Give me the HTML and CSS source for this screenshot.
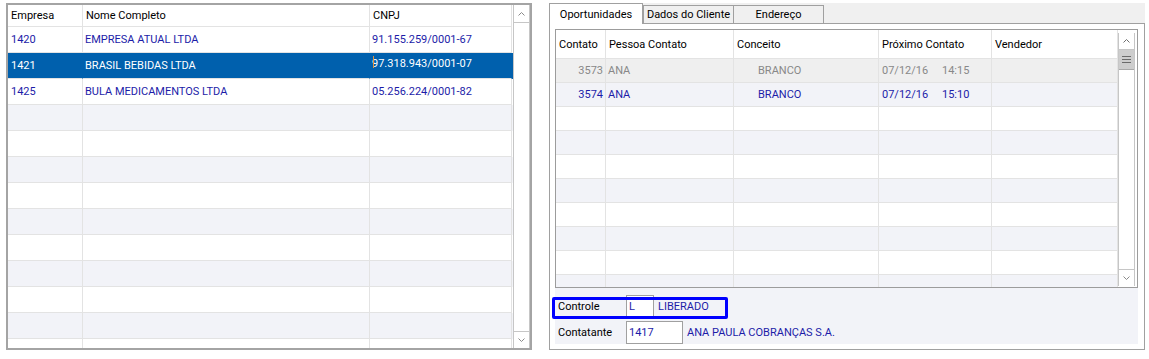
FILE: index.html
```html
<!DOCTYPE html>
<html lang="pt-BR">
<head>
    <meta charset="UTF-8">
    <title>Clientes - Oportunidades</title>
    <link rel="stylesheet" href="styles.css">
</head>
<body>

    <div class="screen">
        <!-- lista de empresas -->
        <div class="grid companies">
            <div class="grid-body">
                <div class="row head">
                    <div class="cell">Empresa</div>
                    <div class="cell">Nome Completo</div>
                    <div class="cell cnpj">CNPJ</div>
                </div>
                <div class="row">
                    <div class="cell">1420</div>
                    <div class="cell name">EMPRESA ATUAL LTDA</div>
                    <div class="cell cnpj">91.155.259/0001-67</div>
                </div>
                <div class="row selected">
                    <div class="cell">1421</div>
                    <div class="cell name">BRASIL BEBIDAS LTDA</div>
                    <div class="cell cnpj editing"><span class="caret"></span>97.318.943/0001-07</div>
                </div>
                <div class="row">
                    <div class="cell">1425</div>
                    <div class="cell name">BULA MEDICAMENTOS LTDA</div>
                    <div class="cell cnpj">05.256.224/0001-82</div>
                </div>
                <div class="row"><div class="cell"></div><div class="cell"></div><div class="cell"></div></div>
                <div class="row"><div class="cell"></div><div class="cell"></div><div class="cell"></div></div>
                <div class="row"><div class="cell"></div><div class="cell"></div><div class="cell"></div></div>
                <div class="row"><div class="cell"></div><div class="cell"></div><div class="cell"></div></div>
                <div class="row"><div class="cell"></div><div class="cell"></div><div class="cell"></div></div>
                <div class="row"><div class="cell"></div><div class="cell"></div><div class="cell"></div></div>
                <div class="row"><div class="cell"></div><div class="cell"></div><div class="cell"></div></div>
                <div class="row"><div class="cell"></div><div class="cell"></div><div class="cell"></div></div>
                <div class="row"><div class="cell"></div><div class="cell"></div><div class="cell"></div></div>
                <div class="row"><div class="cell"></div><div class="cell"></div><div class="cell"></div></div>
            </div>
            <div class="vscroll">
                <div class="sb-btn up">
                    <svg width="7" height="4" viewBox="0 0 7 4"><polyline points="0.5,3.5 3.5,0.5 6.5,3.5" fill="none" stroke="#8a8a8a" stroke-width="1"/></svg>
                </div>
                <div class="sb-track"></div>
                <div class="sb-btn down">
                    <svg width="7" height="4" viewBox="0 0 7 4"><polyline points="0.5,0.5 3.5,3.5 6.5,0.5" fill="none" stroke="#8a8a8a" stroke-width="1"/></svg>
                </div>
            </div>
        </div>

        <!-- abas do cliente -->
        <div class="tabs-panel">
            <div class="tab-strip">
                <div class="tab active">Oportunidades</div>
                <div class="tab dados">Dados do Cliente</div>
                <div class="tab endereco">Endereço</div>
            </div>
            <div class="tab-page">
                <div class="grid contacts">
                    <div class="grid-body">
                        <div class="row head">
                            <div class="cell">Contato</div>
                            <div class="cell">Pessoa Contato</div>
                            <div class="cell">Conceito</div>
                            <div class="cell">Próximo Contato</div>
                            <div class="cell">Vendedor</div>
                        </div>
                        <div class="row inactive">
                            <div class="cell num">3573</div>
                            <div class="cell person">ANA</div>
                            <div class="cell concept">BRANCO</div>
                            <div class="cell"><span class="date">07/12/16</span>14:15</div>
                            <div class="cell"></div>
                        </div>
                        <div class="row">
                            <div class="cell num">3574</div>
                            <div class="cell person">ANA</div>
                            <div class="cell concept">BRANCO</div>
                            <div class="cell"><span class="date">07/12/16</span>15:10</div>
                            <div class="cell"></div>
                        </div>
                        <div class="row"><div class="cell"></div><div class="cell"></div><div class="cell"></div><div class="cell"></div><div class="cell"></div></div>
                        <div class="row"><div class="cell"></div><div class="cell"></div><div class="cell"></div><div class="cell"></div><div class="cell"></div></div>
                        <div class="row"><div class="cell"></div><div class="cell"></div><div class="cell"></div><div class="cell"></div><div class="cell"></div></div>
                        <div class="row"><div class="cell"></div><div class="cell"></div><div class="cell"></div><div class="cell"></div><div class="cell"></div></div>
                        <div class="row"><div class="cell"></div><div class="cell"></div><div class="cell"></div><div class="cell"></div><div class="cell"></div></div>
                        <div class="row"><div class="cell"></div><div class="cell"></div><div class="cell"></div><div class="cell"></div><div class="cell"></div></div>
                        <div class="row"><div class="cell"></div><div class="cell"></div><div class="cell"></div><div class="cell"></div><div class="cell"></div></div>
                        <div class="row"><div class="cell"></div><div class="cell"></div><div class="cell"></div><div class="cell"></div><div class="cell"></div></div>
                    </div>
                    <div class="vscroll">
                        <div class="sb-btn up">
                            <svg width="7" height="4" viewBox="0 0 7 4"><polyline points="0.5,3.5 3.5,0.5 6.5,3.5" fill="none" stroke="#6e6e6e" stroke-width="1"/></svg>
                        </div>
                        <div class="sb-thumb">
                            <svg width="9" height="7" viewBox="0 0 9 7"><path d="M0 0.5H9M0 3.5H9M0 6.5H9" stroke="#6a6a6a" stroke-width="1"/></svg>
                        </div>
                        <div class="sb-track"></div>
                        <div class="sb-btn down">
                            <svg width="7" height="4" viewBox="0 0 7 4"><polyline points="0.5,0.5 3.5,3.5 6.5,0.5" fill="none" stroke="#8a8a8a" stroke-width="1"/></svg>
                        </div>
                    </div>
                </div>

                <div class="fields">
                    <div class="field-row highlight">
                        <span class="field-label">Controle</span>
                        <span class="field-input short">L</span>
                        <span class="field-value">LIBERADO</span>
                    </div>
                    <div class="field-row tall">
                        <span class="field-label">Contatante</span>
                        <span class="field-input medium">1417</span>
                        <span class="field-value">ANA PAULA COBRANÇAS S.A.</span>
                    </div>
                </div>
            </div>
        </div>
    </div>

</body>
</html>
```

FILE: styles.css
```css
body {
    margin: 0;
    background-color: #fff;
    font-family: Roboto, "Liberation Sans", Arial, sans-serif;
    font-size: 11px;
    color: #000;
}
.screen {
    display: flex;
    align-items: flex-start;
    gap: 17px;
    padding: 3px 0 0 6px;
}

/* grids */
.grid {
    display: flex;
    box-sizing: border-box;
    overflow: hidden;
    background-color: #fff;
}
.grid-body {
    flex: 1;
    overflow: hidden;
}
.row {
    display: grid;
}
.cell {
    display: flex;
    align-items: center;
    box-sizing: border-box;
    padding-left: 3px;
    border-right: 1px solid #e3e3e3;
    border-bottom: 1px solid #e3e3e3;
    white-space: nowrap;
    overflow: hidden;
    color: #1c1ca8;
}
.row.head .cell {
    color: #000;
}
.row:nth-child(odd):not(.head) {
    background-color: #f2f3f8;
}

.companies {
    width: 526px;
    height: 347px;
    border: 2px solid #a4a4a4;
}
.companies .row {
    grid-template-columns: 75px 287px 142px;
    height: 26px;
}
.companies .row.head {
    height: 22px;
}
.companies .cell.name,
.companies .cell.cnpj {
    padding-left: 2px;
}
.companies .row.head .cell.cnpj {
    padding-left: 3px;
}
.companies .row.selected {
    background-color: #0060ad;
}
.companies .row.selected .cell {
    color: #fff;
    border-right-color: #0060ad;
}
.cell.editing {
    position: relative;
    align-items: flex-start;
    padding-top: 4px;
}
.caret {
    position: absolute;
    left: 3px;
    top: 3px;
    width: 1px;
    height: 12px;
    background-color: #e0913f;
}

.contacts {
    width: 583px;
    height: 259px;
    border: 1px solid #9c9c9c;
}
.contacts .row {
    grid-template-columns: 50px 128px 145px 113px 126px;
    height: 24px;
}
.contacts .row.head {
    height: 29px;
}
.contacts .row.inactive {
    background-color: #efefef;
}
.contacts .row.inactive .cell {
    color: #888;
}
.cell.num {
    justify-content: flex-end;
    padding-right: 2px;
}
.cell.person {
    padding-left: 2px;
}
.cell.concept {
    padding-left: 24px;
}
.date {
    flex: none;
    width: 60px;
}

/* scrollbars */
.vscroll {
    width: 17px;
    display: flex;
    flex-direction: column;
    box-sizing: border-box;
    border-left: 1px solid #c6c6c6;
    border-right: 1px solid #c6c6c6;
    background-color: #fff;
}
.sb-btn {
    display: flex;
    align-items: center;
    justify-content: center;
    box-sizing: border-box;
    height: 18px;
}
.sb-btn.up {
    border-bottom: 1px solid #c6c6c6;
}
.sb-btn.down {
    height: 17px;
    border-top: 1px solid #c6c6c6;
}
.sb-track {
    flex: 1;
}
.contacts .vscroll {
    margin: 3px 2px 1px 0;
}
.contacts .sb-btn.up {
    height: 17px;
}
.sb-thumb {
    height: 20px;
    display: flex;
    align-items: center;
    justify-content: center;
    background-color: #cdcdcd;
    border-bottom: 1px solid #a8a8a8;
    box-sizing: border-box;
}

/* tabs */
.tabs-panel {
    width: 596px;
}
.tab-strip {
    display: flex;
    align-items: flex-end;
    height: 20px;
    background-color: #f0f0f0;
}
.tab {
    display: flex;
    align-items: center;
    justify-content: center;
    box-sizing: border-box;
    height: 18px;
    border: 1px solid #a0a0a0;
    border-bottom: none;
    background-color: #f0f0f0;
}
.tab.active {
    position: relative;
    z-index: 1;
    width: 94px;
    height: 21px;
    margin-bottom: -1px;
    background-color: #fff;
}
.tab.dados {
    width: 91px;
}
.tab.endereco {
    width: 90px;
    border-left: none;
}
.tab-page {
    height: 327px;
    box-sizing: border-box;
    padding: 5px 6px 5px 5px;
    border: 1px solid #a0a0a0;
    background-color: #fff;
}

/* campos */
.fields {
    display: flex;
    flex-direction: column;
    gap: 4px;
    height: 56px;
    box-sizing: border-box;
    padding: 7px 0 0 3px;
    background-color: #f2f3f8;
}
.field-row {
    position: relative;
    display: flex;
    align-items: center;
    height: 22px;
}
.field-row.tall {
    height: 23px;
}
.field-label {
    width: 68px;
}
.field-input {
    display: flex;
    align-items: center;
    height: 100%;
    box-sizing: border-box;
    padding-left: 2px;
    border: 1px solid #a0a0a0;
    background-color: #fff;
    color: #1c1ca8;
}
.field-input.short {
    width: 28px;
}
.field-input.medium {
    width: 57px;
}
.field-value {
    margin-left: 4px;
    color: #1c1ca8;
}
.highlight::after {
    content: '';
    position: absolute;
    left: -6px;
    top: 2px;
    width: 176px;
    height: 22px;
    box-sizing: border-box;
    border: 3px solid #0000ff;
    border-radius: 2px;
    pointer-events: none;
}
```
